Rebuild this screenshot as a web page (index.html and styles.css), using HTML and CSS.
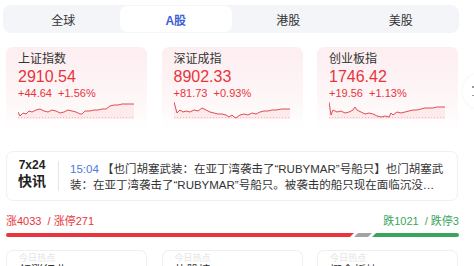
FILE: index.html
```html
<!DOCTYPE html>
<html>
<head>
	<meta charset="utf-8">
	<title>行情</title>
	<link rel="stylesheet" href="styles.css">
</head>
<body>

	<div class="tabs">
		<div class="tab">全球</div>
		<div class="tab active">A股</div>
		<div class="tab">港股</div>
		<div class="tab">美股</div>
	</div>

	<div class="indexes">
		<div class="card">
			<div class="name">上证指数</div>
			<div class="price">2910.54</div>
			<div class="change">+44.64&nbsp; +1.56%</div>
			<svg class="spark" viewBox="0 0 116 17" preserveAspectRatio="none">
				<path class="area" d="M0 10 L2 14 L5 11 L8 12 L11 9 L14 10 L18 8 L22 7 L26 9 L30 10 L34 8 L38 9 L42 11 L46 10 L50 8 L54 9 L58 10 L62 12 L64 12 L67 9 L72 9 L76 8 L80 8 L84 7 L88 7 L92 4 L96 3 L100 3 L104 2 L108 2 L116 2 L116 17 L0 17 Z"/>
				<line class="base" x1="0" y1="15.5" x2="116" y2="15.5"/>
				<path class="line" d="M0 10 L2 14 L5 11 L8 12 L11 9 L14 10 L18 8 L22 7 L26 9 L30 10 L34 8 L38 9 L42 11 L46 10 L50 8 L54 9 L58 10 L62 12 L64 12 L67 9 L72 9 L76 8 L80 8 L84 7 L88 7 L92 4 L96 3 L100 3 L104 2 L108 2 L116 2"/>
			</svg>
		</div>
		<div class="card">
			<div class="name">深证成指</div>
			<div class="price">8902.33</div>
			<div class="change">+81.73&nbsp; +0.93%</div>
			<svg class="spark" viewBox="0 0 116 17" preserveAspectRatio="none">
				<path class="area" d="M0 0 L3 11 L6 8 L9 10 L12 9 L16 10 L20 8 L24 9 L28 6 L32 8 L36 10 L40 11 L44 12 L48 12 L52 13 L55 15 L58 13 L60 15 L62 16 L66 13 L70 12 L74 13 L78 11 L82 12 L86 10 L90 9 L94 9 L98 8 L102 8 L108 7 L116 7 L116 17 L0 17 Z"/>
				<line class="base" x1="0" y1="15.5" x2="116" y2="15.5"/>
				<path class="line" d="M0 0 L3 11 L6 8 L9 10 L12 9 L16 10 L20 8 L24 9 L28 6 L32 8 L36 10 L40 11 L44 12 L48 12 L52 13 L55 15 L58 13 L60 15 L62 16 L66 13 L70 12 L74 13 L78 11 L82 12 L86 10 L90 9 L94 9 L98 8 L102 8 L108 7 L116 7"/>
			</svg>
		</div>
		<div class="card">
			<div class="name">创业板指</div>
			<div class="price">1746.42</div>
			<div class="change">+19.56&nbsp; +1.13%</div>
			<svg class="spark" viewBox="0 0 116 17" preserveAspectRatio="none">
				<path class="area" d="M0 0 L2 13 L4 8 L8 10 L12 9 L16 11 L20 10 L24 8 L26 5 L28 8 L32 10 L36 12 L40 11 L44 12 L48 14 L52 15 L56 14 L60 15 L62 11 L64 13 L68 10 L72 11 L76 10 L80 9 L84 8 L88 8 L92 7 L96 6 L104 6 L108 5 L116 5 L116 17 L0 17 Z"/>
				<line class="base" x1="0" y1="15.5" x2="116" y2="15.5"/>
				<path class="line" d="M0 0 L2 13 L4 8 L8 10 L12 9 L16 11 L20 10 L24 8 L26 5 L28 8 L32 10 L36 12 L40 11 L44 12 L48 14 L52 15 L56 14 L60 15 L62 11 L64 13 L68 10 L72 11 L76 10 L80 9 L84 8 L88 8 L92 7 L96 6 L104 6 L108 5 L116 5"/>
			</svg>
		</div>
	</div>

	<!-- the round "more" button sticks out at the right edge -->
	<div class="more"><span></span><span></span></div>

	<div class="news">
		<div class="news-tag">
			<div class="tag-top">7x24</div>
			<div class="tag-bottom">快讯</div>
		</div>
		<div class="news-text"><span class="time">15:04</span> 【也门胡塞武装：在亚丁湾袭击了“RUBYMAR”号船只】也门胡塞武装：在亚丁湾袭击了“RUBYMAR”号船只。被袭击的船只现在面临沉没的危险，船员已安全撤离。</div>
	</div>

	<div class="stats">
		<span class="up">涨4033 &nbsp;/ 涨停271</span>
		<span class="down">跌1021 &nbsp;/ 跌停3</span>
	</div>
	<div class="bar">
		<div class="bar-up"></div>
		<div class="bar-flat"></div>
		<div class="bar-down"></div>
	</div>

	<div class="bottom">
		<div class="box"><div class="box-sub">今日热点</div><div class="box-title">领涨行业 ›</div></div>
		<div class="box"><div class="box-sub">今日热点</div><div class="box-title">热股榜 ›</div></div>
		<div class="box"><div class="box-sub">今日热点</div><div class="box-title">概念板块 ›</div></div>
	</div>

</body>
</html>
```

FILE: styles.css
```css
html {
	overflow: hidden;
}
body {
	margin: 0;
	width: 474px;
	height: 266px;
	overflow: hidden;
	position: relative;
	background: #ffffff;
	color: #333333;
	font-family: "Liberation Sans", "Noto Sans CJK SC", sans-serif;
	font-size: 12px;
}
.tabs {
	display: grid;
	grid-template-columns: repeat(4, 1fr);
	margin: 5px 15px 0 3px;
	padding: 1px 2px 1px 4px;
	height: 26px;
	background: #f4f5f8;
	border-radius: 8px;
}
.tab {
	display: flex;
	align-items: center;
	justify-content: center;
	font-size: 12px;
	color: #333333;
	border-radius: 7px;
}
.tab.active {
	background: #ffffff;
	color: #3d5fd6;
	font-weight: bold;
}
.indexes {
	display: grid;
	grid-template-columns: repeat(3, 141px);
	column-gap: 14.5px;
	margin: 14px 0 0 6px;
}
.card {
	padding: 4px 13px 12px 12px;
	border-radius: 7px;
	background: linear-gradient(180deg, #fdeef0 0%, #fef6f7 60%, #ffffff 100%);
}
.name {
	line-height: 16px;
	font-size: 12px;
	color: #333333;
}
.price {
	line-height: 20px;
	font-size: 16px;
	color: #e8343c;
}
.change {
	line-height: 12px;
	font-size: 11px;
	color: #e8343c;
}
.spark {
	display: block;
	width: 116px;
	height: 17px;
	margin-top: 3px;
}
.spark .line {
	fill: none;
	stroke: #e24b52;
	stroke-width: 1;
}
.spark .area {
	fill: #fbe1e3;
	opacity: 0.6;
}
.spark .base {
	stroke: #f0b9bd;
	stroke-width: 1;
	stroke-dasharray: 1 2;
}
.more {
	position: absolute;
	left: 463px;
	top: 74px;
	width: 30px;
	height: 34px;
	border-radius: 50%;
	background: #ffffff;
	box-shadow: 0 0 4px rgba(0, 0, 0, 0.06);
	display: flex;
	flex-direction: column;
	justify-content: center;
	gap: 7px;
	padding-left: 9px;
	box-sizing: border-box;
}
.more span {
	display: block;
	width: 5px;
	height: 1.5px;
	background: #999999;
}
.news {
	display: flex;
	align-items: center;
	margin: 20px 16px 0 6px;
	height: 48px;
	border: 1px solid #eeeff2;
	border-radius: 7px;
}
.news-tag {
	width: 28px;
	padding: 0 12px 0 11px;
	border-right: 1px solid #e3e5ea;
	text-align: center;
	font-weight: bold;
	color: #222222;
	white-space: nowrap;
}
.tag-top {
	font-size: 12px;
	line-height: 14px;
	margin-top: -3px;
}
.tag-bottom {
	font-size: 14px;
	line-height: 19px;
}
.news-text {
	flex: 1;
	padding: 0 13px 0 11px;
	font-size: 11.5px;
	line-height: 16px;
	color: #333333;
	display: -webkit-box;
	-webkit-line-clamp: 2;
	-webkit-box-orient: vertical;
	overflow: hidden;
	margin-top: 2px;
}
.time {
	color: #4a7bd8;
}
.stats {
	display: flex;
	justify-content: space-between;
	margin: 13px 15px 0 6px;
	font-size: 11px;
	line-height: 14px;
}
.up {
	color: #e8343c;
}
.down {
	color: #3aa55c;
}
.bar {
	display: flex;
	gap: 2px;
	margin: 5px 15px 0 6px;
	height: 4px;
}
.bar-up {
	width: 348px;
	background: #e8343c;
	border-radius: 2px 0 0 2px;
	clip-path: polygon(0 0, 100% 0, calc(100% - 4px) 100%, 0 100%);
}
.bar-flat {
	width: 18px;
	margin-left: -2px;
	background: #a3a3a3;
	clip-path: polygon(4px 0, 100% 0, calc(100% - 4px) 100%, 0 100%);
}
.bar-down {
	flex: 1;
	margin-left: -2px;
	background: #3aa55c;
	border-radius: 0 2px 2px 0;
	clip-path: polygon(4px 0, 100% 0, 100% 100%, 0 100%);
}
.bottom {
	display: grid;
	grid-template-columns: repeat(3, 141px);
	column-gap: 14.5px;
	margin: 13px 0 0 6px;
}
.box {
	height: 14px;
	overflow: hidden;
	border: 1px solid #eeeff2;
	border-bottom: none;
	border-radius: 7px 7px 0 0;
	padding: 3px 12px 0 12px;
}
.box-sub {
	font-size: 9px;
	line-height: 9px;
	color: #e4e4e4;
}
.box-title {
	font-size: 12px;
	line-height: 16px;
	color: #333333;
}
```
